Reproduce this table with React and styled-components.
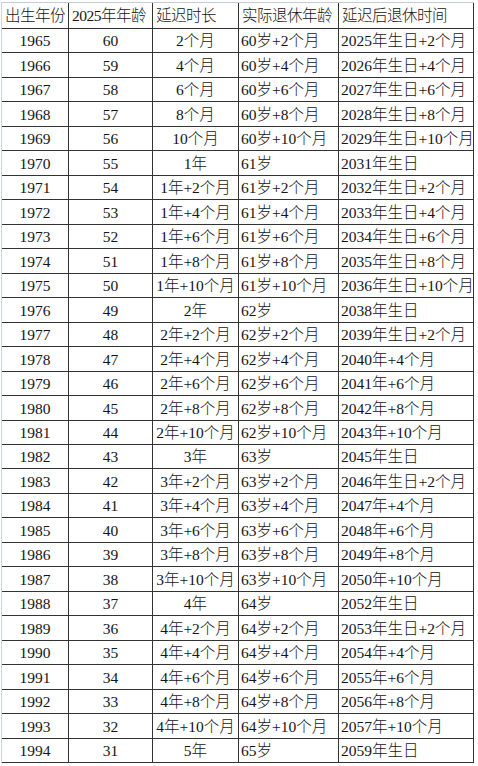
import React from "react";
import styled, { createGlobalStyle } from "styled-components";

const GlobalStyle = createGlobalStyle`
  html, body {
    margin: 0;
    padding: 0;
    background: #ffffff;
  }
  * {
    box-sizing: border-box;
  }
`;

const Page = styled.div`
  width: 478px;
  height: 766px;
  padding: 2px 0 0 1px;
  overflow: hidden;
  background: #fff;
`;

const Grid = styled.div`
  display: grid;
  grid-template-columns: 67px 84px 86px 100px 135px;
  grid-template-rows: 26px;
  grid-auto-rows: 24.47px;
  width: 473px;
  border-top: 1px solid #c3ccd8;
  border-left: 1px solid #cfd5de;
  font-family: "Liberation Serif", "Noto Sans CJK SC", serif;
  font-weight: 300;
  font-size: 15.5px;
  color: #141414;
`;

const Cell = styled.div`
  display: flex;
  align-items: center;
  justify-content: ${(p) => (p.$center ? "center" : "flex-start")};
  padding: 1px ${(p) => (p.$center ? "0" : "2px")} 0;
  border-right: 1px solid #333;
  border-bottom: 1px solid #333;
  white-space: nowrap;
  overflow: hidden;
  line-height: 1;
`;

const HeadCell = styled(Cell)`
  padding-left: 3px;
  letter-spacing: -0.5px;
`;

const headers = ["出生年份", "2025年年龄", "延迟时长", "实际退休年龄", "延迟后退休时间"];

const rows = [
  ["1965", "60", "2个月", "60岁+2个月", "2025年生日+2个月"],
  ["1966", "59", "4个月", "60岁+4个月", "2026年生日+4个月"],
  ["1967", "58", "6个月", "60岁+6个月", "2027年生日+6个月"],
  ["1968", "57", "8个月", "60岁+8个月", "2028年生日+8个月"],
  ["1969", "56", "10个月", "60岁+10个月", "2029年生日+10个月"],
  ["1970", "55", "1年", "61岁", "2031年生日"],
  ["1971", "54", "1年+2个月", "61岁+2个月", "2032年生日+2个月"],
  ["1972", "53", "1年+4个月", "61岁+4个月", "2033年生日+4个月"],
  ["1973", "52", "1年+6个月", "61岁+6个月", "2034年生日+6个月"],
  ["1974", "51", "1年+8个月", "61岁+8个月", "2035年生日+8个月"],
  ["1975", "50", "1年+10个月", "61岁+10个月", "2036年生日+10个月"],
  ["1976", "49", "2年", "62岁", "2038年生日"],
  ["1977", "48", "2年+2个月", "62岁+2个月", "2039年生日+2个月"],
  ["1978", "47", "2年+4个月", "62岁+4个月", "2040年+4个月"],
  ["1979", "46", "2年+6个月", "62岁+6个月", "2041年+6个月"],
  ["1980", "45", "2年+8个月", "62岁+8个月", "2042年+8个月"],
  ["1981", "44", "2年+10个月", "62岁+10个月", "2043年+10个月"],
  ["1982", "43", "3年", "63岁", "2045年生日"],
  ["1983", "42", "3年+2个月", "63岁+2个月", "2046年生日+2个月"],
  ["1984", "41", "3年+4个月", "63岁+4个月", "2047年+4个月"],
  ["1985", "40", "3年+6个月", "63岁+6个月", "2048年+6个月"],
  ["1986", "39", "3年+8个月", "63岁+8个月", "2049年+8个月"],
  ["1987", "38", "3年+10个月", "63岁+10个月", "2050年+10个月"],
  ["1988", "37", "4年", "64岁", "2052年生日"],
  ["1989", "36", "4年+2个月", "64岁+2个月", "2053年生日+2个月"],
  ["1990", "35", "4年+4个月", "64岁+4个月", "2054年+4个月"],
  ["1991", "34", "4年+6个月", "64岁+6个月", "2055年+6个月"],
  ["1992", "33", "4年+8个月", "64岁+8个月", "2056年+8个月"],
  ["1993", "32", "4年+10个月", "64岁+10个月", "2057年+10个月"],
  ["1994", "31", "5年", "65岁", "2059年生日"],
];

export default function App() {
  return (
    <Page>
      <GlobalStyle />
      <Grid>
        {headers.map((h) => (
          <HeadCell key={h}>{h}</HeadCell>
        ))}
        {rows.map((r) =>
          r.map((v, i) => (
            <Cell key={r[0] + i} $center={i < 3}>
              {v}
            </Cell>
          ))
        )}
      </Grid>
    </Page>
  );
}
